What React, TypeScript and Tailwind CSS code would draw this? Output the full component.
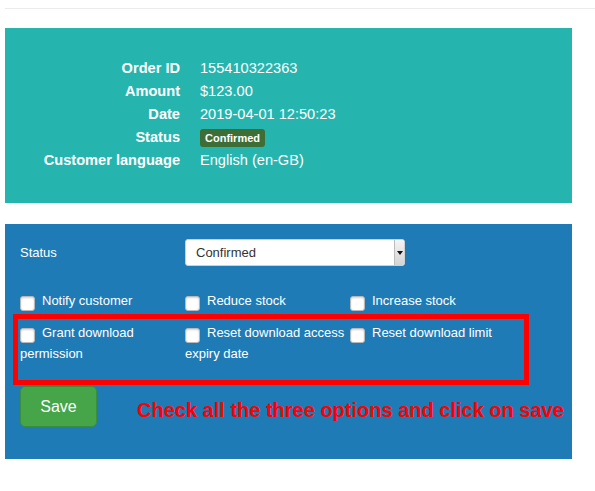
import React from "react";

const Box = () => (
  <span className="inline-block w-[15px] h-[15px] bg-white border border-[#b9b9b9] rounded-[3px] align-[-6px] mr-[7px] shadow-[inset_0_1px_2px_rgba(0,0,0,0.18)]" />
);

export default function App() {
  const rows: [string, React.ReactNode][] = [
    ["Order ID", "155410322363"],
    ["Amount", "$123.00"],
    ["Date", "2019-04-01 12:50:23"],
    [
      "Status",
      <span className="inline-block bg-[#3e6e35] text-white text-[11px] font-bold leading-[18px] px-[5px] rounded-[3px] align-middle">
        Confirmed
      </span>,
    ],
    ["Customer language", "English (en-GB)"],
  ];
  const checks = [
    "Notify customer",
    "Reduce stock",
    "Increase stock",
    "Grant download permission",
    "Reset download access expiry date",
    "Reset download limit",
  ];
  return (
    <div className="w-[595px] min-h-[491px] bg-white font-['Liberation_Sans',Arial,sans-serif]">
      <div className="pt-[8px] pl-[5px]">
        <div className="h-px bg-[#e9ebec]" />
      </div>
      <div className="ml-[5px] mt-[19px] w-[567px] h-[175px] bg-[#26b5ae] pt-[29px]">
        <div className="grid grid-cols-[175px_1fr] gap-x-[20px] text-white text-[14.6px] leading-[23px]">
          {rows.map(([k, v]) => (
            <React.Fragment key={k}>
              <div className="text-right font-bold">{k}</div>
              <div>{v}</div>
            </React.Fragment>
          ))}
        </div>
      </div>
      <div className="relative ml-[5px] mt-[21px] w-[567px] h-[235px] bg-[#1f7bb6] px-[15px] pt-[15px] text-white text-[13px]">
        <div className="flex items-center h-[27px]">
          <div className="w-[165px] pt-px">Status</div>
          <div className="flex w-[220px] h-[27px] bg-white border border-[#cfcfcf] rounded-[3px] overflow-hidden">
            <div className="flex-1 flex items-center pl-[10px] pt-px text-[#333] text-[13px]">Confirmed</div>
            <div className="w-[10px] h-full bg-gradient-to-b from-[#f4f4f4] to-[#d4d4d4] border-l border-[#bdbdbd] flex items-center justify-center">
              <svg width="6" height="4" viewBox="0 0 6 4">
                <path d="M0 0 L6 0 L3 4 Z" fill="#111" />
              </svg>
            </div>
          </div>
        </div>
        <div className="mt-[24px] grid grid-cols-[165px_165px_165px] gap-y-[11px] leading-[21px]">
          {checks.map((c) => (
            <div key={c}>
              <Box />
              {c}
            </div>
          ))}
        </div>
        <div className="mt-[22px] flex items-center">
          <button className="shrink-0 w-[77px] h-[41px] bg-[#46a549] border border-[#3b8e3e] rounded-[5px] text-[16px] text-white">
            Save
          </button>
          <span className="ml-[40px] pt-[7px] whitespace-nowrap text-[20px] font-bold text-[#ff0000]">
            Check all the three options and click on save
          </span>
        </div>
        <div className="absolute left-[8px] top-[90px] w-[516px] h-[71px] border-[5px] border-[#ff0000]" />
      </div>
    </div>
  );
}
